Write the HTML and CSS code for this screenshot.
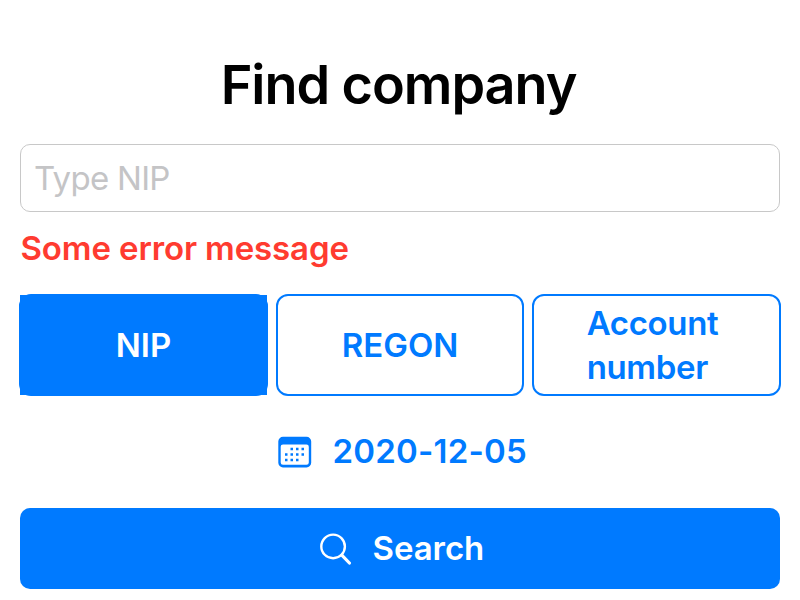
FILE: index.html
```html
<!DOCTYPE html>
<html lang="en">
<head>
<meta charset="utf-8">
<title>Find company</title>
<link rel="stylesheet" href="styles.css">
</head>
<body>
<main class="screen">
  <h1 class="title">Find company</h1>
  <div class="field">Type NIP</div>
  <p class="error">Some error message</p>
  <div class="types">
    <button class="type selected"><span class="label">NIP</span></button>
    <button class="type"><span class="label">REGON</span></button>
    <button class="type"><span class="label account">Account<br>number</span></button>
  </div>
  <button class="date">
    <svg class="calendar" width="34" height="32" viewBox="0 0 34 32">
      <path d="M5 0.8H28.5A4.7 4.7 0 0 1 33.2 5.5V26.7A4.7 4.7 0 0 1 28.5 31.4H5A4.7 4.7 0 0 1 0.3 26.7V5.5A4.7 4.7 0 0 1 5 0.8zM5 8.5A2.3 2.3 0 0 0 2.7 10.8V26.5A2.3 2.3 0 0 0 5 28.8H28.5A2.3 2.3 0 0 0 30.8 26.5V10.8A2.3 2.3 0 0 0 28.5 8.5z" fill="currentColor" fill-rule="evenodd"/>
      <path d="M12.5 13.1H26.5M7 18.5H26.5M7 23.9H21" fill="none" stroke="currentColor" stroke-width="2.5" stroke-dasharray="2.5 3"/>
    </svg>
    <span class="date-text">2020-12-05</span>
  </button>
  <button class="search">
    <svg class="glass" width="32" height="32" viewBox="0 0 32 32" fill="none" stroke="currentColor" stroke-linecap="round">
      <circle cx="13.1" cy="13.4" r="11.8" stroke-width="2.4"/>
      <path d="M21.8 22.1L29.4 30" stroke-width="3.2"/>
    </svg>
    <span class="search-text">Search</span>
  </button>
</main>
</body>
</html>
```
FILE: styles.css
```css
* { box-sizing: border-box; }
body { margin: 0; background: #fff; font-family: Inter, sans-serif; }
.screen { height: 600px; padding: 50px 20px 0; overflow: hidden; }
.title { margin: 0; height: 94px; padding-right: 3px; font-size: 54px; font-weight: 600; line-height: 70px; text-align: center; white-space: nowrap; letter-spacing: -1.05px; }
.field { height: 68px; border: 1px solid #c8c8c8; border-radius: 10px; padding: 0 13px; font-size: 33px; line-height: 66px; color: #c4c4c6; letter-spacing: -.7px; }
.error { margin: 15px 0 0; height: 67px; padding: 0 0 0 .5px; color: #ff3b30; font-size: 33px; font-weight: 600; line-height: 42px; letter-spacing: -.12px; }
.types { display: grid; grid-template-columns: 249px 248px 249px; gap: 8px; margin: 0 -1px; height: 102px; }
button { border: 0; background: none; padding: 0; font: 600 33px/44px Inter, sans-serif; color: #007aff; }
.type { position: relative; border: 2px solid #007aff; border-radius: 12px; text-align: left; display: flex; align-items: center; justify-content: center; }
.selected { background: #007aff; color: #fff; }
.selected::before { content: ""; position: absolute; inset: -1px; background: #007aff; }
.label { position: relative; padding-bottom: 1px; }
.account { padding-right: 8px; letter-spacing: -.35px; }
.date { display: flex; align-items: center; gap: 20.5px; height: 60px; width: 249px; margin: 25px 0 0 258px; letter-spacing: .2px; white-space: nowrap; }
.date-text, .search-text { padding-bottom: 1px; }
.calendar, .glass { flex: none; }
.calendar { margin-top: 2px; }
.search { display: flex; align-items: center; gap: 20.5px; width: 760px; height: 81px; margin-top: 27px; padding-left: 300px; background: #007aff; color: #fff; border-radius: 10px; letter-spacing: -.05px; }
```
